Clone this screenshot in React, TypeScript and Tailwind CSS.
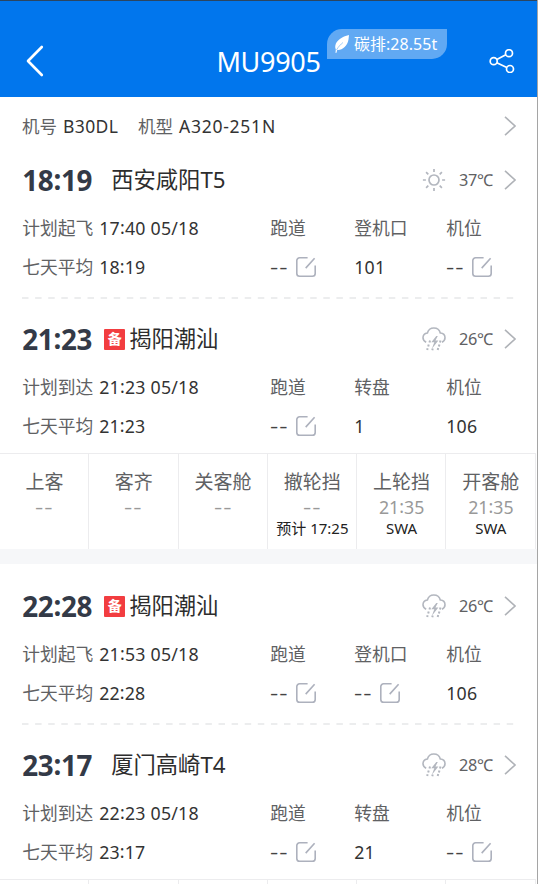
import React from 'react';

const clockTime = (s: string) =>
  s.split(':').map((part, i) => (
    <React.Fragment key={i}>
      {i > 0 && <span className="inline-block -translate-y-[1.5px]">:</span>}
      {part}
    </React.Fragment>
  ));

function Chevron() {
  return (
    <svg className="block h-5 w-3 shrink-0" viewBox="0 0 12 20" fill="none" stroke="#b0b3b8" strokeWidth="1.6">
      <path d="M1 .8l10 9.200L1 19.200" />
    </svg>
  );
}

function EditIcon() {
  return (
    <svg className="h-5 w-5 shrink-0" viewBox="0 0 20 20" fill="none" stroke="#adb1bd" strokeWidth="1.600">
      <path d="M11.600 .8H3.600A2.800 2.800 0 0 0 .8 3.600v12.800a2.800 2.800 0 0 0 2.800 2.800h12.800a2.800 2.800 0 0 0 2.800-2.800V8.600M18.600 1.300l-8.900 9.800" />
    </svg>
  );
}

function SunIcon() {
  return (
    <svg className="block h-6 w-6" viewBox="0 0 24 24" fill="none" stroke="#b3b7bf" strokeWidth="1.700">
      <circle cx="12" cy="12" r="5" />
      <path d="M12 .9v3M12 20.100v3M.9 12h3M20.100 12h3M4.100 4.100l2.200 2.200M17.700 17.700l2.200 2.200M4.100 19.900l2.200-2.200M17.700 6.300l2.200-2.200" />
    </svg>
  );
}

function StormIcon() {
  return (
    <svg className="block h-6 w-6" viewBox="0 0 24 24" fill="none" stroke="#b3b7bf" strokeWidth="1.600">
      <path d="M4.200 15.200C2.200 14.300 1 12.800 1 10.800c0-2.600 1.900-4.500 4.400-4.800C6.200 3 8.700 1 11.800 1c3.300 0 5.800 2 6.500 5 2.700.2 4.700 2.200 4.700 4.800 0 2-1.100 3.600-3 4.400" />
      <path d="M14.300 9l-5 6.300h3l-2.400 6.400 6.500-8.200h-3l2.400-4.500z" fill="#b3b7bf" stroke="none" />
      <path d="M8 13.600l-.5 2M6.700 17.600l-.5 2M5.600 21.300l-.4 1.700M10.700 21.500l-.4 1.700M18.500 13.600l-.5 2M17.400 17.400l-.5 2M16.200 21l-.5 2" strokeWidth="2" />
    </svg>
  );
}

interface LegProps {
  time: string;
  station: string;
  reserve?: boolean;
  temp: string;
  sunny?: boolean;
  plan: string;
  planTime: string;
  average: string;
  mid: string;
  midValue?: string;
  stand?: string;
}

function Dashes() {
  return (
    <span className="inline-block w-[19px]">
      <span className="inline-block origin-left scale-x-[1.45] tracking-[0.700px]">--</span>
    </span>
  );
}

function Value({ value }: { value?: string }) {
  return value ? (
    <span className="text-[#333] tracking-[0.200px]">{value}</span>
  ) : (
    <span className="flex items-center gap-[7px] text-[#444]">
      <Dashes />
      <EditIcon />
    </span>
  );
}

function Leg(p: LegProps) {
  return (
    <section className="pb-px pl-[22.200px] text-[17.750px] leading-6 text-[#606163]">
      <div className="flex h-12 items-center pr-[21px]">
        <span className="w-[82px] shrink-0 text-[27.800px] font-bold tracking-[-0.300px] text-[#333a47]">{clockTime(p.time)}</span>
        {p.reserve ? (
          <span className="mr-1 flex h-[21px] w-[21px] items-center justify-center rounded-[1px] bg-[#f23d40] text-[14px] font-bold leading-5 text-white">
            备
          </span>
        ) : (
          <span className="w-[7px]" />
        )}
        <span className="text-[22.300px] text-[#2d2d2d]">{p.station}</span>
        <span className="ml-auto">{p.sunny ? <SunIcon /> : <StormIcon />}</span>
        <span className="ml-[13px] mr-[10px] w-[35px] whitespace-nowrap text-[16.300px] tracking-[-0.300px]">{p.temp}℃</span>
        <Chevron />
      </div>
      <div className="grid h-12 grid-cols-[248px_84px_92px_1fr] items-center">
        <span className="whitespace-pre">
          {p.plan}
          <span className="ml-[6px] text-[#333] tracking-[0.220px]">{clockTime(p.planTime)}</span>
        </span>
        <span>跑道</span>
        <span>{p.mid}</span>
        <span>机位</span>
      </div>
      <div className="-mt-px grid h-[31px] grid-cols-[248px_84px_92px_1fr] items-center">
        <span>
          七天平均
          <span className="ml-[6px] text-[#333] tracking-[0.150px]">{clockTime(p.average)}</span>
        </span>
        <Value />
        <Value value={p.midValue} />
        <Value value={p.stand} />
      </div>
    </section>
  );
}

function Divider() {
  return (
    <svg className="mx-[22px] mb-4 mt-[14px] block h-[2px] w-[494px]" viewBox="0 0 494 2">
      <path d="M0 1h494" stroke="#e6e7e9" strokeWidth="1.600" strokeDasharray="6.500 6.600" />
    </svg>
  );
}

const steps = [
  { name: '上客' },
  { name: '客齐' },
  { name: '关客舱' },
  { name: '撤轮挡', note: '预计 17:25' },
  { name: '上轮挡', time: '21:35', note: 'SWA' },
  { name: '开客舱', time: '21:35', note: 'SWA' },
];

export default function App() {
  return (
    <div className="h-[884px] w-[538px] overflow-hidden border-r border-[#a5a5a5] bg-white font-['Noto_Sans','Noto_Sans_CJK_SC',sans-serif]">
      <header className="relative flex h-[97px] items-center justify-between border-t border-[#2b4560] bg-[#0176ed] pl-[26px] pr-[22px] pt-[24px] text-white">
        <svg className="h-8 w-[18px]" viewBox="0 0 18 32" fill="none" stroke="white" strokeWidth="2.600" strokeLinecap="round" strokeLinejoin="round">
          <path d="M15.800 2L2 16l13.800 14" />
        </svg>
        <h1 className="ml-[4px] translate-y-px text-[27px] leading-8 tracking-[-0.300px]">MU9905</h1>
        <svg className="h-6 w-[26px]" viewBox="0 0 26 24" fill="none" stroke="white" strokeWidth="1.700">
          <circle cx="4.700" cy="12.200" r="3.500" />
          <circle cx="20" cy="4.200" r="3.500" />
          <circle cx="21" cy="20" r="3.500" />
          <path d="M7.800 10.600l9-4.800M7.800 13.800l10 4.800" />
        </svg>
        <div className="absolute left-[327px] top-[28px] flex h-[30px] w-[120px] items-center rounded-br-[15px] rounded-tl-[15px] bg-[#61a9f3] pl-[8px] text-[15.900px] leading-6">
          <svg className="mr-[5px] h-[18px] w-[14px] shrink-0" viewBox="0 0 14 18">
            <path d="M14 0C7 1.500 1.200 5.500.300 10.800c-.2 1.500 0 2.700.5 3.500L.5 18l1-.2.700-2.900C7 15.500 12.500 11 13.500 4.500z" fill="white" />
            <path d="M1.500 15C3.500 11.500 5.500 9.500 8 7.500" stroke="#61a9f3" strokeWidth=".6" fill="none" />
          </svg>
          <span className="whitespace-nowrap tracking-[0.100px]">碳排:28.55t</span>
        </div>
      </header>

      <div className="flex h-[57px] items-center pl-[22px] pr-[21px] text-[17.500px] leading-6 text-[#606163]">
        <span>机号</span>
        <span className="ml-[6px] w-[75px] text-[#333] tracking-[0.400px]">B30DL</span>
        <span>机型</span>
        <span className="ml-[6px] text-[#333] tracking-[0.750px]">A320-251N</span>
        <span className="ml-auto">
          <Chevron />
        </span>
      </div>
      <div className="h-[2px]" />

      <Leg time="18:19" station="西安咸阳T5" temp="37" sunny plan="计划起飞" planTime="17:40 05/18" average="18:19" mid="登机口" midValue="101" />
      <Divider />
      <Leg time="21:23" station="揭阳潮汕" reserve temp="26" plan="计划到达" planTime="21:23 05/18" average="21:23" mid="转盘" midValue="1" stand="106" />

      <div className="mt-[11px] grid h-[96px] w-[536px] grid-cols-6 border-t border-[#ececee] pr-[0.500px]">
        {steps.map((s) => (
          <div key={s.name} className="flex flex-col items-center border-r border-[#ececee] pl-px pt-4 text-[#606163]">
            <span className="text-[19px] leading-6">{s.name}</span>
            <span className="flex h-[26px] items-center text-[17.750px] text-[#999]">{s.time ? clockTime(s.time) : <Dashes />}</span>
            <span className="-translate-y-px whitespace-nowrap text-[15px] leading-[18px] text-[#222]">{s.note}</span>
          </div>
        ))}
      </div>
      <div className="mb-[18px] h-[15px] bg-[#f6f7f9]" />

      <Leg time="22:28" station="揭阳潮汕" reserve temp="26" plan="计划起飞" planTime="21:53 05/18" average="22:28" mid="登机口" stand="106" />
      <Divider />
      <Leg time="23:17" station="厦门高崎T4" temp="28" plan="计划到达" planTime="22:23 05/18" average="23:17" mid="转盘" midValue="21" />

      <div className="mt-[11px] grid h-[96px] w-[536px] grid-cols-6 border-t border-[#ececee] pr-[0.500px]">
        {steps.map((s) => (
          <div key={s.name} className="border-r border-[#ececee]" />
        ))}
      </div>
    </div>
  );
}
